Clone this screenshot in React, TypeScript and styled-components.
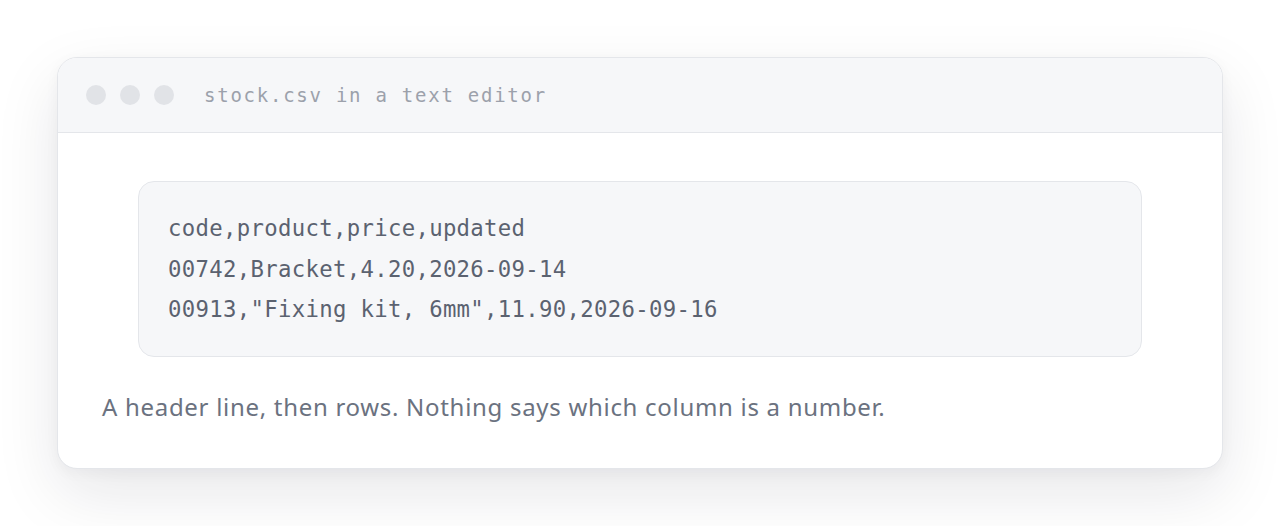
import React from "react";
import styled, { createGlobalStyle } from "styled-components";

const GlobalStyle = createGlobalStyle`
  html, body {
    margin: 0;
    padding: 0;
    background: #ffffff;
  }
  * { box-sizing: border-box; }
`;

const Page = styled.div`
  padding: 57px;
  min-height: 526px;
`;

const Window = styled.section`
  background: #ffffff;
  border: 1px solid #e4e6ea;
  border-radius: 20px;
  overflow: hidden;
  box-shadow: 0 24px 64px rgba(17, 24, 39, 0.1), 0 4px 14px rgba(17, 24, 39, 0.04);
`;

const TitleBar = styled.header`
  display: flex;
  align-items: center;
  height: 75px;
  padding: 0 28px;
  background: #f6f7f9;
  border-bottom: 1px solid #e4e6ea;
`;

const Dots = styled.div`
  display: flex;
  gap: 14px;
  margin-right: 30px;
`;

const Dot = styled.span`
  width: 20px;
  height: 20px;
  border-radius: 50%;
  background: #e1e3e7;
`;

const Title = styled.span`
  font-family: "DejaVu Sans Mono", "Liberation Mono", monospace;
  font-size: 19px;
  letter-spacing: 1.75px;
  color: #9ca1ab;
`;

const Content = styled.div`
  padding: 48px 44px 43px;
`;

const CodeBox = styled.pre`
  margin: 0 36px;
  padding: 26px 29px;
  background: #f6f7f9;
  border: 1px solid #e4e6ea;
  border-radius: 16px;
  font-family: "DejaVu Sans Mono", "Liberation Mono", monospace;
  font-size: 22.3px;
  letter-spacing: 0.32px;
  line-height: 40.5px;
  color: #5b6270;
`;

const Caption = styled.p`
  margin: 32px 0 0;
  font-family: "Segoe UI", "Noto Sans", sans-serif;
  font-size: 24px;
  letter-spacing: 0.7px;
  line-height: 36px;
  color: #6b7280;
`;

const lines = [
  "code,product,price,updated",
  "00742,Bracket,4.20,2026-09-14",
  '00913,"Fixing kit, 6mm",11.90,2026-09-16',
];

export default function App() {
  return (
    <>
      <GlobalStyle />
      <Page>
        <Window>
          <TitleBar>
            <Dots>
              <Dot />
              <Dot />
              <Dot />
            </Dots>
            <Title>stock.csv in a text editor</Title>
          </TitleBar>
          <Content>
            <CodeBox>{lines.join("\n")}</CodeBox>
            <Caption>A header line, then rows. Nothing says which column is a number.</Caption>
          </Content>
        </Window>
      </Page>
    </>
  );
}
